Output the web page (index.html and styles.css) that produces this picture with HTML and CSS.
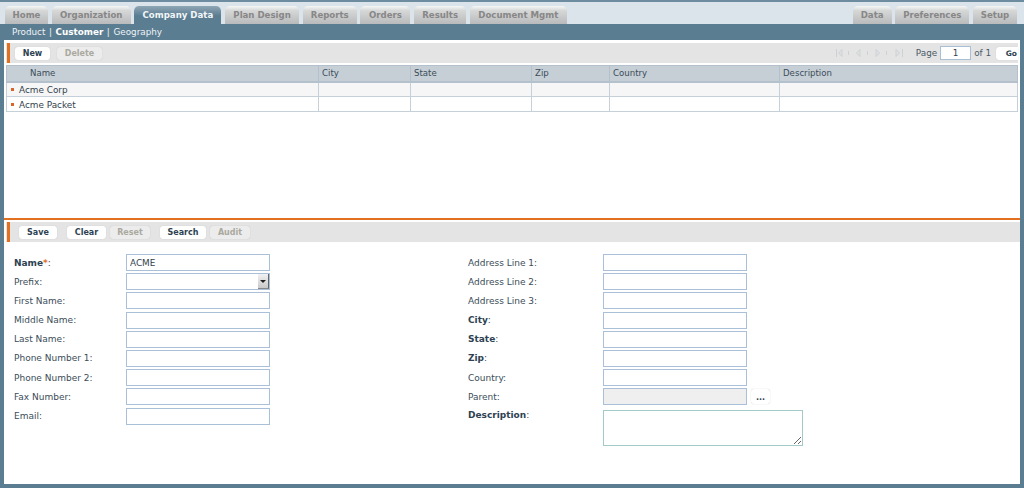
FILE: index.html
```html
<!DOCTYPE html>
<html lang="en">
<head>
<meta charset="utf-8">
<title>Company Data - Customer</title>
<link rel="stylesheet" href="styles.css">
</head>
<body>
<header class="top">
  <nav class="tabs">
    <a class="tab w43">Home</a>
    <a class="tab w79">Organization</a>
    <a class="tab active w87">Company Data</a>
    <a class="tab w74">Plan Design</a>
    <a class="tab w54">Reports</a>
    <a class="tab w50">Orders</a>
    <a class="tab w52">Results</a>
    <a class="tab w97">Document Mgmt</a>
  </nav>
  <nav class="tabs">
    <a class="tab w39">Data</a>
    <a class="tab w74">Preferences</a>
    <a class="tab w44">Setup</a>
  </nav>
</header>
<div class="subnav"><span>Product</span> | <b>Customer</b> | <span>Geography</span></div>
<main class="content">
  <section class="list">
    <div class="toolbar">
      <button class="btn">New</button>
      <button class="btn off">Delete</button>
      <div class="pager">
        <svg class="pgicons" width="72" height="10" viewBox="0 0 72 10" aria-hidden="true">
          <g fill="#dfe2e4" stroke="#cdd1d4" stroke-width="1">
            <path d="M2.500 1v8" fill="none"/><path d="M8 1.500 4.500 5 8 8.500z"/>
            <path d="M14.500 3v4" fill="none"/>
            <path d="M26 1.500 22.500 5 26 8.500z"/>
            <path d="M33.500 3v4" fill="none"/>
            <path d="M42 1.500 45.500 5 42 8.500z"/>
            <path d="M52.500 3v4" fill="none"/>
            <path d="M62 1.500 65.500 5 62 8.500z"/><path d="M68.500 1v8" fill="none"/>
          </g>
        </svg>
        <span>Page</span>
        <span class="pageno">1</span>
        <span>of 1</span>
        <button class="btn go">Go</button>
      </div>
    </div>
    <table class="grid">
      <colgroup>
        <col class="c1"><col class="c2"><col class="c3"><col class="c4"><col class="c5"><col>
      </colgroup>
      <thead>
        <tr><th class="first">Name</th><th>City</th><th>State</th><th>Zip</th><th>Country</th><th>Description</th></tr>
      </thead>
      <tbody>
        <tr class="odd"><td class="name"><i class="dot"></i>Acme Corp</td><td></td><td></td><td></td><td></td><td></td></tr>
        <tr><td class="name"><i class="dot"></i>Acme Packet</td><td></td><td></td><td></td><td></td><td></td></tr>
      </tbody>
    </table>
  </section>
  <section class="detail">
    <div class="toolbar">
      <button class="btn">Save</button>
      <button class="btn b2">Clear</button>
      <button class="btn off">Reset</button>
      <button class="btn gap">Search</button>
      <button class="btn off">Audit</button>
    </div>
    <form class="form">
      <div class="col">
        <label class="row"><span class="lab"><b>Name<em>*</em></b>:</span><input class="field" value="ACME"></label>
        <div class="row"><span class="lab">Prefix:</span><span class="field select"><i class="arrow"></i></span></div>
        <label class="row"><span class="lab">First Name:</span><input class="field"></label>
        <label class="row"><span class="lab">Middle Name:</span><input class="field"></label>
        <label class="row"><span class="lab">Last Name:</span><input class="field"></label>
        <label class="row"><span class="lab">Phone Number 1:</span><input class="field"></label>
        <label class="row"><span class="lab">Phone Number 2:</span><input class="field"></label>
        <label class="row"><span class="lab">Fax Number:</span><input class="field"></label>
        <label class="row"><span class="lab">Email:</span><input class="field"></label>
      </div>
      <div class="col">
        <label class="row"><span class="lab">Address Line 1:</span><input class="field"></label>
        <label class="row"><span class="lab">Address Line 2:</span><input class="field"></label>
        <label class="row"><span class="lab">Address Line 3:</span><input class="field"></label>
        <label class="row"><span class="lab"><b>City</b>:</span><input class="field"></label>
        <label class="row"><span class="lab"><b>State</b>:</span><input class="field"></label>
        <label class="row"><span class="lab"><b>Zip</b>:</span><input class="field"></label>
        <label class="row"><span class="lab">Country:</span><input class="field"></label>
        <div class="row"><span class="lab">Parent:</span><span class="field ro"></span><button type="button" class="btn more">...</button></div>
        <label class="row area"><span class="lab"><b>Description</b>:</span><textarea class="ta"></textarea></label>
      </div>
    </form>
  </section>
</main>
</body>
</html>
```
FILE: styles.css
```css
* { box-sizing: border-box; }
html, body { margin: 0; height: 100%; }
body {
  width: 1024px; height: 488px; overflow: hidden;
  background: #5b7d92;
  font-family: "DejaVu Sans", Verdana, sans-serif;
  font-size: 9px;
  color: #33424d;
  display: flex; flex-direction: column;
}
.top {
  height: 24px; flex: none;
  background: #dbe4ea;
  border-top: 2px solid #6d8ca0;
  display: flex; justify-content: space-between;
  padding: 4px 7px 0 5px;
}
.tabs { display: flex; gap: 3.700px; }
.tab {
  height: 18px; display: flex; align-items: center; justify-content: center;
  border-radius: 5px 5px 0 0;
  background: linear-gradient(#f6f7f7, #d6d7d7 25%, #b9babb);
  color: #878787; font-weight: 700; font-size: 8.600px;
  white-space: nowrap;
}
.tab.active { background: linear-gradient(#8fa6b5, #5b7d92 55%); color: #f2f6f8; }
.w39 { width: 39px; } .w43 { width: 43px; } .w44 { width: 44px; }
.w50 { width: 50px; } .w52 { width: 52px; } .w54 { width: 54px; }
.w74 { width: 74px; } .w79 { width: 79px; } .w87 { width: 87px; } .w97 { width: 97px; }
.subnav {
  height: 16px; flex: none; padding-left: 12px;
  color: #eef3f6; font-size: 8.800px; line-height: 16px; word-spacing: 0.800px;
}
.subnav b { color: #fff; }
.content {
  width: 1016px; height: 444px; margin-left: 4px; flex: none;
  background: #fff;
  display: flex; flex-direction: column;
  padding-top: 3px;
}
.list { height: 175px; flex: none; padding: 0 2px; }
.toolbar {
  height: 20px; background: #e4e4e4;
  border-left: 3px solid #e4e4e4;
  display: flex; align-items: center;
  gap: 7px; position: relative;
  padding-left: 6px;
}
.toolbar::before {
  content: ""; position: absolute; left: -2px; top: 0; bottom: 0; width: 3px;
  background: #e2701f;
}
.btn {
  height: 13px; width: 35px; padding: 0;
  border: 0; border-radius: 3px;
  background: #fff;
  box-shadow: 0 0 1px #b8b8b8;
  font: 700 8px "DejaVu Sans", Verdana, sans-serif;
  color: #2d4252;
}
.btn.off { background: #ececec; color: #aaa99f; width: 45px; }
.pager {
  margin-left: auto; display: flex; align-items: center;
  color: #4a5a66; font-size: 8.800px;
}
.pgicons { margin-right: 10px; }
.pageno {
  width: 31px; height: 14px; margin: 0 3px 0 3px;
  background: #fff; border: 1px solid #a9c0d4;
  text-align: center; line-height: 12px; color: #33424d;
}
.btn.go { width: 22px; margin-left: 5px; text-align: right; padding-right: 1px; font-size: 7.500px; border-radius: 3px 0 0 3px; }
.grid {
  width: 1012px; margin-top: 2px; table-layout: fixed;
  border-collapse: collapse;
  font-size: 8.600px;
}
.c1 { width: 312px; } .c2 { width: 92px; } .c3 { width: 121px; } .c4 { width: 78px; } .c5 { width: 170px; }
.grid th {
  height: 16px; padding: 0 0 0 3px;
  background: #c6cfd6; font-weight: 400; text-align: left;
  border: 1px solid #b4c0cb; border-bottom-width: 2px;
  color: #3b4c59;
}
.grid th.first { padding-left: 23px; }
.grid td { height: 15px; padding: 0; border: 1px solid #c6d0d9; }
.odd td { background: #f6f6f6; }
.grid td.name { padding: 1px 0 0 4px; color: #33424d; font-size: 8.900px; }
.dot { display: inline-block; width: 3px; height: 3px; background: #d9642a; margin-right: 5px; vertical-align: 2px; }
.detail {
  flex: 1; border-top: 2px solid #e2701f;
  padding: 2px 0 0 2px;
  display: flex; flex-direction: column;
}
.detail .toolbar { gap: 4px; padding-left: 10px; }
.detail .btn { width: 38px; }
.detail .btn.b2 { width: 39px; margin-left: 6px; }
.detail .btn.off { width: 40px; }
.detail .btn.gap { width: 46px; margin-left: 6px; }
.form { display: flex; padding: 12px 0 0 8px; }
.col { width: 454px; display: flex; flex-direction: column; gap: 2.200px; }
.row { display: flex; align-items: center; height: 17px; }
.lab { width: 112px; font-size: 9px; flex: none; color: #3b4c59; }
.lab b { color: #2d4252; }
.lab em { color: #e2701f; font-style: normal; }
.col:last-child .lab { width: 135px; }
.field {
  width: 144px; height: 17px; padding: 0 3px; flex: none;
  border: 1px solid #a9c0d8; background: #fff; border-radius: 0; outline: 0;
  font: 8.900px "DejaVu Sans", Verdana, sans-serif; color: #33424d;
}
.select { display: flex; justify-content: flex-end; padding: 0; }
.arrow {
  width: 11px; height: 15px; background: linear-gradient(#f2f2f2, #c9c9c9);
  border-right: 1px solid #666; border-bottom: 1px solid #888;
  display: flex; align-items: center; justify-content: center;
}
.arrow::before {
  content: ""; border: 3px solid transparent; border-top-color: #222; border-bottom: 0;
}
.ro { background: #efefef; }
.btn.more {
  width: 19px; height: 15px; margin-left: 4px;
  display: flex; align-items: flex-end; justify-content: center;
  line-height: 13px; background: #fff;
}
.row.area { align-items: flex-start; height: 36px; margin-top: 2px; }
.ta {
  width: 200px; height: 36px; flex: none; padding: 2px;
  border: 1px solid #a3c9c9; border-radius: 0; outline: 0; background: #fff;
}
```
